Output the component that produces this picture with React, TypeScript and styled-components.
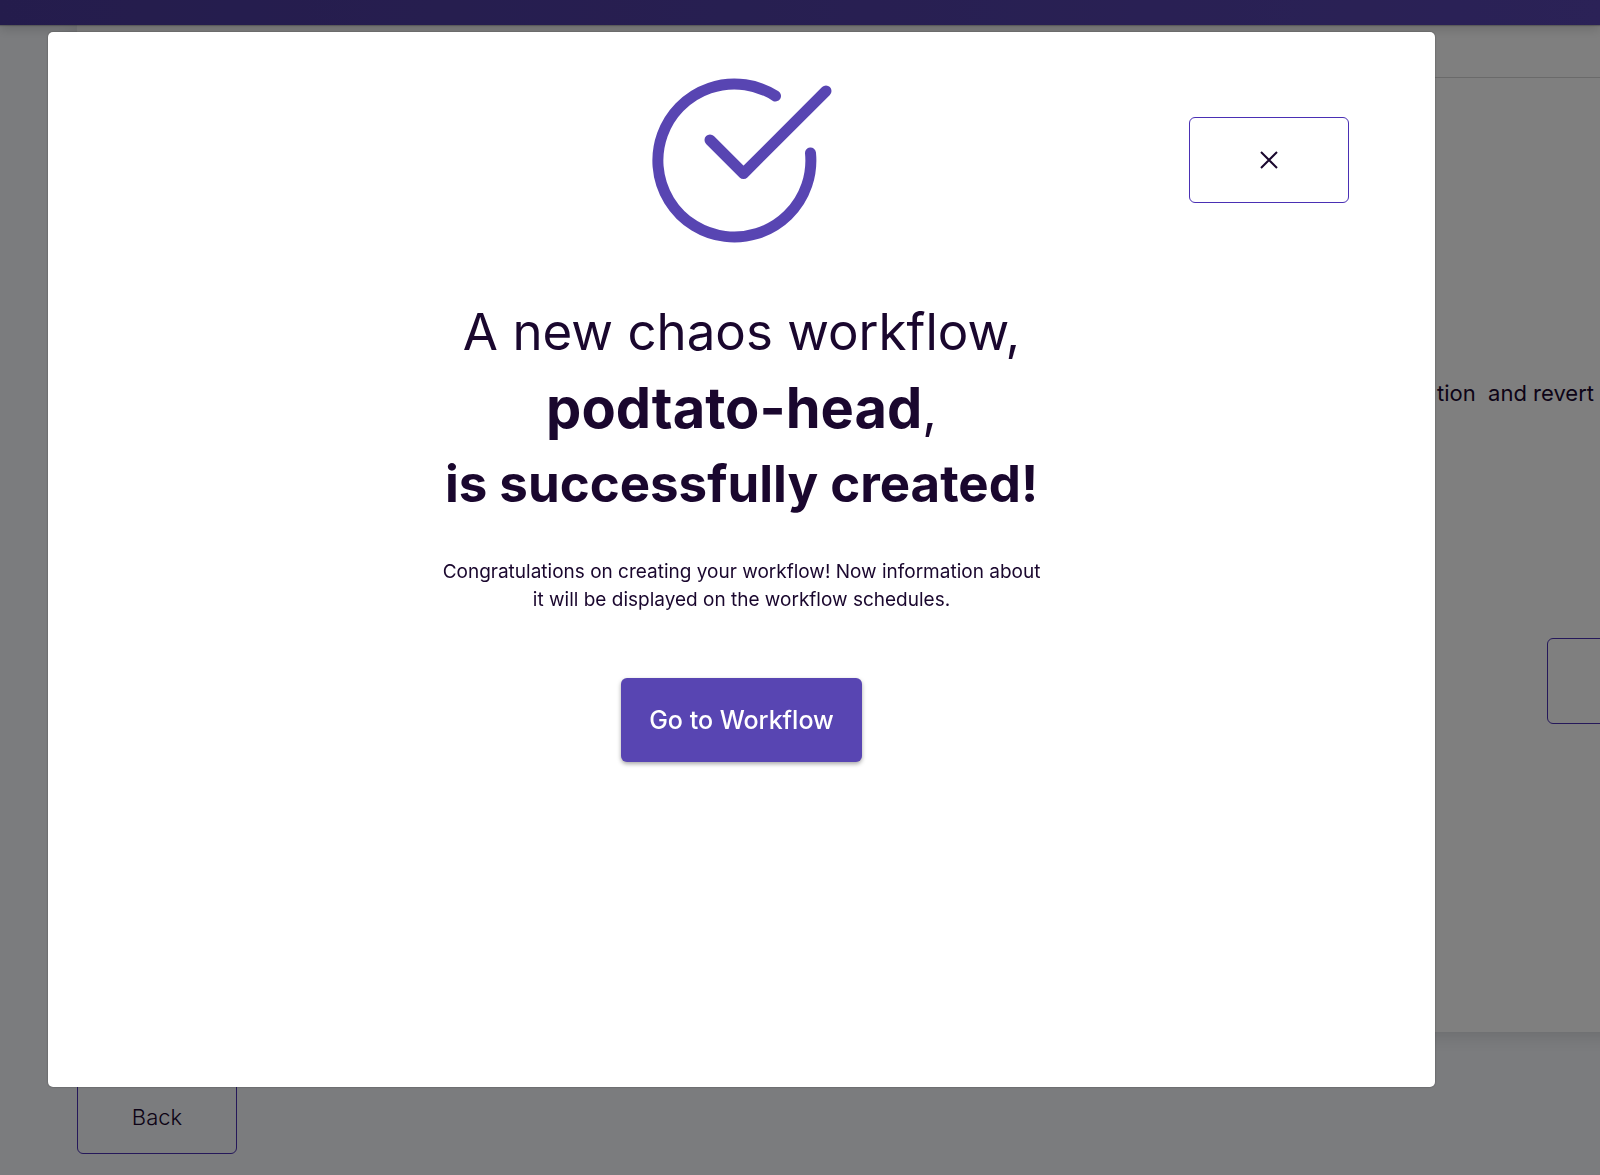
import React from "react";
import styled, { createGlobalStyle } from "styled-components";

const GlobalStyle = createGlobalStyle`
  *, *::before, *::after {
    box-sizing: border-box;
  }
  body {
    margin: 0;
    overflow: hidden;
    background: #f7f9fd;
    color: #1a072e;
    font-family: Inter, "Liberation Sans", sans-serif;
  }
  button {
    font-family: inherit;
    color: inherit;
    cursor: pointer;
  }
`;

const Page = styled.div`
  display: flex;
  flex-direction: column;
  min-height: 100vh;
`;

const TopBar = styled.header`
  position: relative;
  height: 25px;
  background: linear-gradient(90deg, #493999, #5644ae);
  box-shadow: 0 1px 1px rgba(0, 0, 0, 0.2), 0 4px 12px rgba(0, 0, 0, 0.16);
`;

const Main = styled.main`
  padding-left: 77px;
`;

const Card = styled.section`
  display: flex;
  flex-direction: column;
  align-items: flex-end;
  height: 1007px;
  margin-right: -24px;
  padding-right: 24px;
  background: #ffffff;
  box-shadow: 0 2px 20px rgba(0, 0, 0, 0.16);
`;

const CardHead = styled.div`
  align-self: stretch;
  height: 53px;
  margin-right: -24px;
  border-bottom: 1px solid #d4d4d4;
`;

const Note = styled.p`
  margin: 299px 6px 0 0;
  font-size: 22px;
  line-height: 32px;
  white-space: pre;
`;

const OutlineButton = styled.button<{ $height: number }>`
  display: flex;
  align-items: center;
  justify-content: center;
  width: 160px;
  height: ${(p) => p.$height}px;
  padding: 0;
  border: 1px solid #4a30b4;
  border-radius: 6px;
  background: transparent;
  font-size: 22px;
  font-weight: 300;
`;

const CardAction = styled.div`
  width: 53px;
  margin-top: 229px;
  overflow: hidden;
`;

const Footer = styled.footer`
  padding-top: 48px;
`;

const Backdrop = styled.div`
  position: fixed;
  inset: 0;
  display: flex;
  padding: 32px 165px 88px 48px;
  background: rgba(0, 0, 0, 0.5);
`;

const Dialog = styled.div`
  position: relative;
  display: flex;
  flex: 1;
  flex-direction: column;
  align-items: center;
  padding-top: 44px;
  border-radius: 5px;
  background: #ffffff;
  text-align: center;
  box-shadow: 0 0 2px rgba(0, 0, 0, 0.4);
`;

const CloseSlot = styled.div`
  position: absolute;
  top: 85px;
  right: 86px;
`;

const Title = styled.h1`
  margin: 50px 0 0;
  font-size: 51px;
  font-weight: 400;
  line-height: 76px;
`;

const Name = styled.strong`
  font-size: 56px;
  font-weight: 700;
`;

const Strong = styled.strong`
  display: block;
  font-weight: 700;
  line-height: 72px;
`;

const Message = styled.p`
  margin: 38px 0 0;
  font-size: 19px;
  line-height: 28px;
`;

const PrimaryButton = styled.button`
  margin-top: 64px;
  height: 84px;
  padding: 0 28px;
  border: 0;
  border-radius: 6px;
  background: #5845b2;
  font-size: 25px;
  font-weight: 500;
  box-shadow: 0 2px 4px rgba(0, 0, 0, 0.35);
  && {
    color: #ffffff;
  }
`;

function SuccessIcon() {
  return (
    <svg width="184" height="168" viewBox="0 0 184 168" fill="none" stroke="#5845b2" strokeWidth="11" strokeLinecap="round" aria-hidden="true">
      <path d="M125.500 20A76.500 76.500 0 1 0 160.500 77" />
      <path d="M60 64L93.500 97.500L176 15" strokeLinejoin="round" />
    </svg>
  );
}

function CloseIcon() {
  return (
    <svg width="18" height="18" viewBox="0 0 18 18" stroke="#1a072e" strokeWidth="2" aria-hidden="true">
      <path d="M1 1L17 17M17 1L1 17" />
    </svg>
  );
}

export default function App() {
  return (
    <>
      <GlobalStyle />
      <Page>
        <TopBar />
        <Main>
          <Card>
            <CardHead />
            <Note>{"tion  and revert"}</Note>
            <CardAction>
              <OutlineButton $height={86} aria-label="Edit" />
            </CardAction>
          </Card>
          <Footer>
            <OutlineButton $height={74}>Back</OutlineButton>
          </Footer>
        </Main>
      </Page>
      <Backdrop>
        <Dialog role="dialog" aria-modal="true" aria-labelledby="created-title">
          <CloseSlot>
            <OutlineButton $height={86} aria-label="Close">
              <CloseIcon />
            </OutlineButton>
          </CloseSlot>
          <SuccessIcon />
          <Title id="created-title">
            A new chaos workflow,
            <br />
            <Name>podtato-head</Name>,
            <Strong>is successfully created!</Strong>
          </Title>
          <Message>
            Congratulations on creating your workflow! Now information about
            <br />
            it will be displayed on the workflow schedules.
          </Message>
          <PrimaryButton>Go to Workflow</PrimaryButton>
        </Dialog>
      </Backdrop>
    </>
  );
}
